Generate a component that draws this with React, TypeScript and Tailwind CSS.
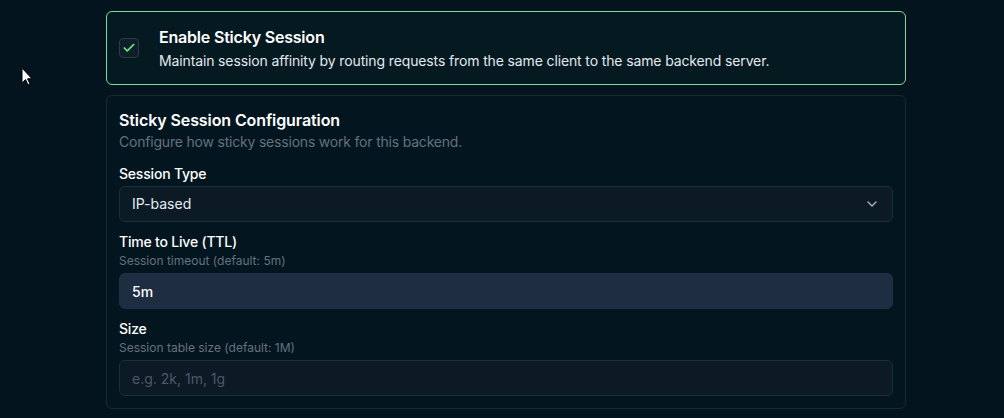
import { useState } from "react";

function CheckIcon() {
  return (
    <svg viewBox="0 0 24 24" className="h-3.5 w-3.5" fill="none" stroke="currentColor" strokeWidth={3} strokeLinecap="round" strokeLinejoin="round">
      <path d="M20 6 9 17l-5-5" />
    </svg>
  );
}

function ChevronDown() {
  return (
    <svg viewBox="0 0 24 24" className="h-4 w-4" fill="none" stroke="currentColor" strokeWidth={2} strokeLinecap="round" strokeLinejoin="round">
      <path d="m6 9 6 6 6-6" />
    </svg>
  );
}

function Cursor() {
  return (
    <svg viewBox="0 0 12 19" className="absolute left-[21px] top-[67px] h-[19px] w-[12px]">
      <path d="M1 1v15l3.5-3.5 2.5 5.5 2-1-2.5-5.2H11z" fill="#fff" stroke="#000" strokeWidth={1} />
    </svg>
  );
}

export default function App() {
  const [enabled, setEnabled] = useState(true);
  const [ttl, setTtl] = useState("5m");
  const [size, setSize] = useState("");

  return (
    <div className="relative min-h-[418px] bg-[#03141e] pl-[106px] pt-[11px] font-['Inter',sans-serif] text-white">
      <Cursor />
      <div className="w-[800px]">
        {/* Enable toggle card */}
        <label className="flex cursor-pointer items-center gap-5 rounded-md border border-[#7fd99a] bg-[#051921] px-3 py-[13px]">
          <button
            type="button"
            onClick={() => setEnabled(!enabled)}
            className="flex h-5 w-5 shrink-0 items-center justify-center rounded border border-[#2c3a45] bg-[#0e1f28] text-[#6ee08f]"
          >
            {enabled && <CheckIcon />}
          </button>
          <div>
            <p className="text-base leading-6 font-semibold tracking-[-0.2px]">Enable Sticky Session</p>
            <p className="mt-0.5 text-sm leading-5 text-[#e3e8ee] tracking-[-0.13px]">
              Maintain session affinity by routing requests from the same client to the same backend server.
            </p>
          </div>
        </label>

        {/* Configuration card */}
        <div className="mt-2.5 rounded-md border border-[#1b2935] bg-[#031620] p-3">
          <h2 className="text-base leading-6 font-semibold tracking-[-0.1px]">Sticky Session Configuration</h2>
          <p className="text-sm leading-5 text-[#66717d] tracking-[-0.2px]">Configure how sticky sessions work for this backend.</p>

          <p className="mt-3 text-sm leading-5 font-medium tracking-[-0.2px]">Session Type</p>
          <button
            type="button"
            className="mt-0.5 flex h-9 w-full items-center justify-between rounded-md border border-[#1e2d3a] bg-[#0b1a25] px-3 text-sm text-[#e8edf2]"
          >
            <span>IP-based</span>
            <span className="text-[#aab3bd]">
              <ChevronDown />
            </span>
          </button>

          <p className="mt-2.5 text-sm leading-5 font-medium tracking-[-0.2px]">Time to Live (TTL)</p>
          <p className="mt-px text-xs leading-4 text-[#66717d]">Session timeout (default: 5m)</p>
          <input
            value={ttl}
            onChange={(e) => setTtl(e.target.value)}
            className="mt-1 h-9 w-full rounded-md border border-[#1f2e42] bg-[#1e2d42] px-3 text-sm font-medium text-white outline-none"
          />

          <p className="mt-2.5 text-sm leading-5 font-medium tracking-[-0.2px]">Size</p>
          <p className="mt-px text-xs leading-4 text-[#66717d]">Session table size (default: 1M)</p>
          <input
            value={size}
            onChange={(e) => setSize(e.target.value)}
            placeholder="e.g. 2k, 1m, 1g"
            className="mt-1 h-9 w-full rounded-md border border-[#1e2d3a] bg-[#0b1a25] px-3 text-sm text-white outline-none placeholder:text-[#4d5965]"
          />
        </div>
      </div>
    </div>
  );
}
